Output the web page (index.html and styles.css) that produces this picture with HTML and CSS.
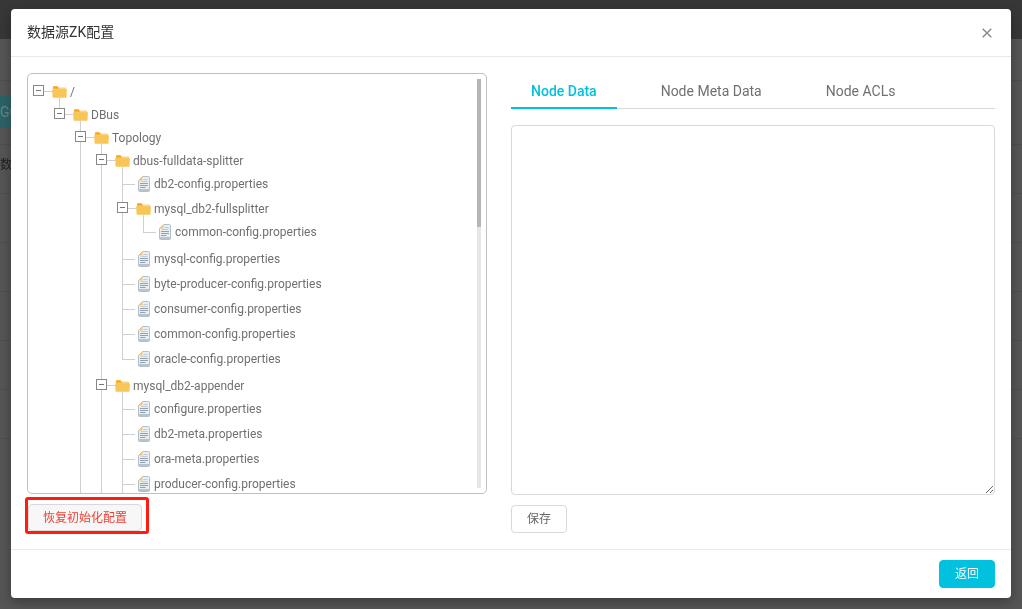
FILE: index.html
```
<!DOCTYPE html>
<html lang="zh-CN">
<head>
<meta charset="utf-8">
<meta name="viewport" content="width=device-width, initial-scale=1">
<title>数据源ZK配置</title>
<link rel="stylesheet" href="styles.css">
</head>
<body>
<svg class="sprite" aria-hidden="true">
  <symbol id="folder" viewBox="0 0 15 12">
    <path d="M1 3V1.200Q1 .2 2 .2H5.500L6.700 1.400H13.300Q14.300 1.400 14.300 2.400V5H1z" fill="#fbd684"/>
    <path d="M1 2.800V1.200Q1 .2 2 .2H5.500L7 2.800z" fill="#f9a81c"/>
    <path d="M.6 3.300H14.400Q15 3.300 14.900 4.100L14.500 10.900Q14.400 11.800 13.500 11.800H1.600Q.7 11.800.6 10.900L.1 4.100Q0 3.300.6 3.300z" fill="#f8c558"/>
  </symbol>
  <symbol id="file" viewBox="0 0 12 16">
    <path d="M4.500.5H10.500Q11.500.5 11.500 1.500V14.500Q11.500 15.500 10.500 15.500H1.500Q.5 15.500.5 14.500V4.500z" fill="#e9eef2" stroke="#b3bfc9"/>
    <path d="M.5 4.500 4.500.5V4.500z" fill="#ffc66b"/>
    <path d="M5.500 3.500H9.500M3 5.500H9.500" stroke="#c3ccd4"/>
    <path d="M2 7.500H10M2 9.500H10M2 11.500H7.500" stroke="#93a1ae"/>
    <path d="M1 14H11" stroke="#b7c3cd" stroke-width="2"/>
  </symbol>
</svg>

<div class="page" aria-hidden="true">
  <div class="page-nav"></div>
  <div class="page-gap"></div>
  <div class="page-bar"><span class="page-go">GO</span></div>
  <div class="page-row">数据</div>
  <div class="page-row"></div>
  <div class="page-row"></div>
  <div class="page-row"></div>
  <div class="page-row"></div>
  <div class="page-row"></div>
</div>

<div class="overlay">
<section class="modal" role="dialog" aria-labelledby="title">
  <header class="modal-header">
    <h1 class="modal-title" id="title">数据源ZK配置</h1>
    <button class="close" type="button" aria-label="关闭"><svg width="10" height="10" viewBox="0 0 10 10"><path d="M.7.7 9.300 9.300M9.300.7.7 9.300" stroke="#888" stroke-width="1.400"/></svg></button>
  </header>
  <div class="modal-body">
    <div class="column">
      <div class="tree-panel">
        <ul class="tree">
          <li class="node"><div class="row"><button class="toggle" type="button" aria-label="折叠"></button><svg class="folder"><use href="#folder"/></svg>/</div>
            <ul class="branch">
              <li class="node"><div class="row"><button class="toggle" type="button" aria-label="折叠"></button><svg class="folder"><use href="#folder"/></svg>DBus</div>
                <ul class="branch">
                  <li class="node continued"><div class="row"><button class="toggle" type="button" aria-label="折叠"></button><svg class="folder"><use href="#folder"/></svg>Topology</div>
                    <ul class="branch">
                      <li class="node"><div class="row"><button class="toggle" type="button" aria-label="折叠"></button><svg class="folder"><use href="#folder"/></svg>dbus-fulldata-splitter</div>
                        <ul class="branch">
                          <li class="node"><div class="row leaf"><svg class="file"><use href="#file"/></svg>db2-config.properties</div></li>
                          <li class="node"><div class="row"><button class="toggle" type="button" aria-label="折叠"></button><svg class="folder"><use href="#folder"/></svg>mysql_db2-fullsplitter</div>
                            <ul class="branch">
                              <li class="node"><div class="row leaf"><svg class="file"><use href="#file"/></svg>common-config.properties</div></li>
                            </ul>
                          </li>
                          <li class="node"><div class="row leaf"><svg class="file"><use href="#file"/></svg>mysql-config.properties</div></li>
                          <li class="node"><div class="row leaf"><svg class="file"><use href="#file"/></svg>byte-producer-config.properties</div></li>
                          <li class="node"><div class="row leaf"><svg class="file"><use href="#file"/></svg>consumer-config.properties</div></li>
                          <li class="node"><div class="row leaf"><svg class="file"><use href="#file"/></svg>common-config.properties</div></li>
                          <li class="node"><div class="row leaf"><svg class="file"><use href="#file"/></svg>oracle-config.properties</div></li>
                        </ul>
                      </li>
                      <li class="node continued"><div class="row"><button class="toggle" type="button" aria-label="折叠"></button><svg class="folder"><use href="#folder"/></svg>mysql_db2-appender</div>
                        <ul class="branch">
                          <li class="node"><div class="row leaf"><svg class="file"><use href="#file"/></svg>configure.properties</div></li>
                          <li class="node"><div class="row leaf"><svg class="file"><use href="#file"/></svg>db2-meta.properties</div></li>
                          <li class="node"><div class="row leaf"><svg class="file"><use href="#file"/></svg>ora-meta.properties</div></li>
                          <li class="node continued"><div class="row leaf"><svg class="file"><use href="#file"/></svg>producer-config.properties</div></li>
                        </ul>
                      </li>
                    </ul>
                  </li>
                </ul>
              </li>
            </ul>
          </li>
        </ul>
        <div class="scrollbar"><div class="thumb"></div></div>
      </div>
      <div class="marked"><button class="button reset" type="button">恢复初始化配置</button></div>
    </div>
    <div class="column">
      <div class="tabs" role="tablist">
        <button class="tab active" type="button" role="tab" aria-selected="true">Node Data</button>
        <button class="tab" type="button" role="tab" aria-selected="false">Node Meta Data</button>
        <button class="tab" type="button" role="tab" aria-selected="false">Node ACLs</button>
      </div>
      <textarea class="editor" aria-label="Node Data"></textarea>
      <button class="button save" type="button">保存</button>
    </div>
  </div>
  <footer class="modal-footer">
    <button class="button primary" type="button">返回</button>
  </footer>
</section>
</div>
</body>
</html>
```
FILE: styles.css
```
* { box-sizing: border-box; }

body {
  margin: 0;
  background: #555;
  font: 12px/16px Roboto, "Noto Sans CJK SC", sans-serif;
  color: #707070;
}

button { font: inherit; cursor: pointer; }
.sprite { position: absolute; width: 0; height: 0; }

/* Page behind the dialog */
.page { position: fixed; inset: 0; overflow: hidden; color: #222; }
.page-nav { height: 39px; background: #373737; }
.page-gap { height: 42px; border-bottom: 1px solid #4e4e4e; }
.page-bar { height: 64px; padding-top: 15px; border-bottom: 1px solid #4e4e4e; }
.page-go {
  display: block;
  width: 40px;
  background: #2c6368;
  color: #6b8587;
  font-size: 14px;
  line-height: 32px;
}
.page-row {
  height: 49px;
  border-bottom: 1px solid #4e4e4e;
  line-height: 40px;
}

/* Dialog */
.overlay {
  position: relative;
  display: flex;
  justify-content: center;
  min-height: 100vh;
  padding: 9px 11px 11px;
}
.modal {
  flex: 1;
  max-width: 1200px;
  display: flex;
  flex-direction: column;
  background: #fff;
  border-radius: 4px;
  box-shadow: 0 4px 12px rgba(0, 0, 0, .3);
}
.modal-header {
  display: flex;
  align-items: center;
  justify-content: space-between;
  height: 48px;
  padding: 0 16px;
  border-bottom: 1px solid #e9e9e9;
}
.modal-title { margin: 0; padding-bottom: 2px; font-size: 14px; font-weight: 400; color: #333; }
.close { display: flex; padding: 3px; border: 0; background: none; }
.modal-body {
  flex: 1;
  display: grid;
  grid-template-columns: 460fr 484fr;
  gap: 24px;
  padding: 16px 16px 15px;
}
.modal-footer {
  display: flex;
  justify-content: flex-end;
  padding: 10px 16px;
  border-top: 1px solid #e9e9e9;
}
.column { display: flex; flex-direction: column; min-width: 0; }

/* Tree */
.tree-panel {
  display: flex;
  justify-content: space-between;
  height: 421px;
  padding: 5px;
  padding-bottom: 0;
  border: 1px solid #bfbfbf;
  border-radius: 5px;
  overflow: hidden;
}
.tree, .branch { margin: 0; padding: 0; list-style: none; }
.tree { padding-top: 1px; }
.branch { padding: 0 0 2px 21px; }
.node { position: relative; }
.branch > .node::before {
  content: "";
  position: absolute;
  top: -5px;
  bottom: 0;
  left: 5px;
  border-left: 1px solid #d0d0d0;
}
.branch > .node:last-child:not(.continued)::before { bottom: auto; height: 18px; }
.row {
  position: relative;
  display: flex;
  align-items: center;
  height: 23px;
  white-space: nowrap;
}
.row::before {
  content: "";
  position: absolute;
  top: 11px;
  left: 6px;
  width: 13px;
  border-top: 1px solid #d0d0d0;
}
.leaf { height: 25px; padding: 0 0 2px 21px; }
.leaf::before { top: 12px; width: 12px; }
.toggle {
  position: relative;
  width: 11px;
  height: 11px;
  margin: 0 8px 2px 0;
  padding: 0;
  border: 1px solid #888;
  background: linear-gradient(#777, #777) center / 5px 1px no-repeat #fff;
}
.folder { width: 15px; height: 12px; margin: 1px 3px 0 0; }
.file { width: 12px; height: 16px; margin: 1px 4px 0 0; }
.scrollbar { width: 4px; height: 409px; background: #e6e6e6; }
.thumb { height: 148px; background: #b5b5b5; }

/* Tabs and editor */
.tabs { display: flex; gap: 24px; height: 36px; border-bottom: 1px solid #d9d9d9; }
.tab {
  height: 36px;
  padding: 2px 20px 0;
  border: 0;
  border-bottom: 2px solid transparent;
  background: none;
  color: #707070;
  font-size: 14px;
}
.tab.active { border-color: #00c1de; color: #00c1de; font-weight: 500; }
.editor {
  height: 370px;
  margin: 16px 0 10px;
  padding: 4px 7px;
  border: 1px solid #d9d9d9;
  border-radius: 4px;
  font: inherit;
  outline: 0;
}

/* Buttons */
.button {
  height: 28px;
  padding: 0 15px;
  border: 1px solid #d9d9d9;
  border-radius: 4px;
  background: #fff;
  color: #666;
}
.save { align-self: flex-start; }
.primary { border-color: #00c1de; background: #00c1de; color: #fff; }
.marked {
  align-self: flex-start;
  margin: 3px -2px 0;
  padding: 4px 4px 0 0;
  border: 3px solid #ff1d12;
  border-radius: 3px;
}
.reset {
  display: block;
  height: 27px;
  padding: 0 14px;
  background: #f7f7f7;
  color: #f04134;
}
```
